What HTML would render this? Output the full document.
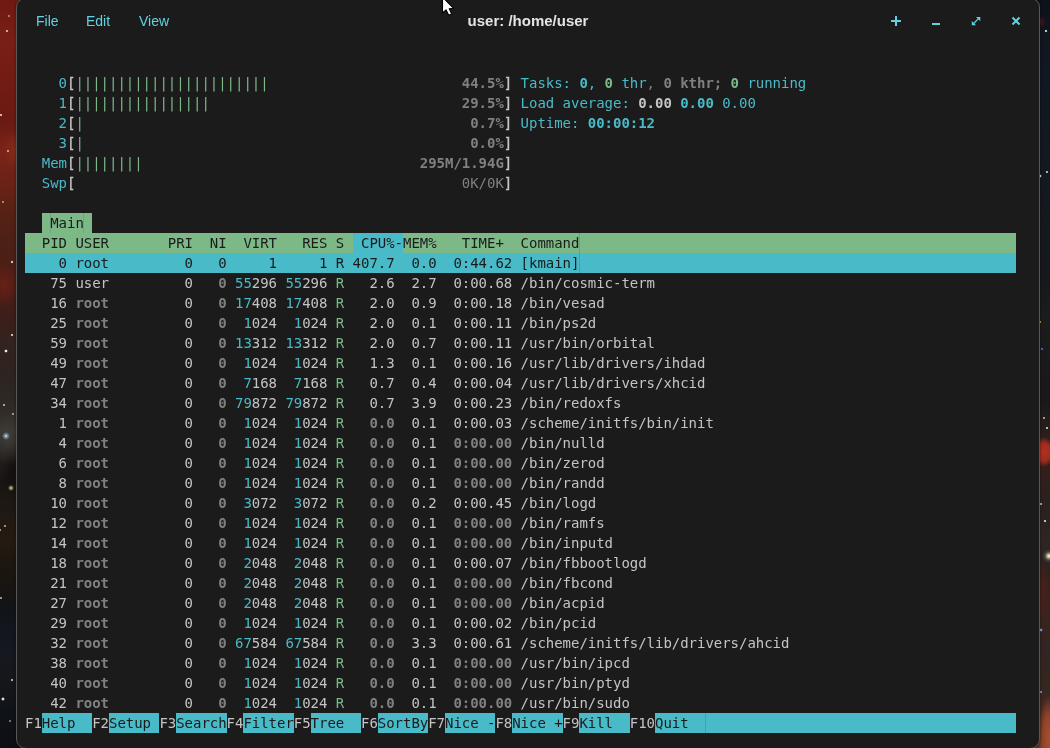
<!DOCTYPE html>
<html lang="en">
<head>
<meta charset="utf-8">
<title>user: /home/user</title>
<style>
html,body{margin:0;padding:0;}
body{width:1050px;height:748px;overflow:hidden;position:relative;background:#0e1016;font-family:"Liberation Sans",sans-serif;}
#wallL{position:absolute;left:0;top:0;width:24px;height:748px;background:
radial-gradient(circle 1.6px at 7px 31px,#c9b9a0 40%,transparent 100%),
radial-gradient(circle 1.4px at 9px 16px,#b98a60 40%,transparent 100%),
radial-gradient(circle 1.6px at 1px 115px,#d8c0a8 40%,transparent 100%),
radial-gradient(circle 1.5px at 8px 151px,#b9a9a0 40%,transparent 100%),
radial-gradient(circle 1.4px at 3px 202px,#a89a80 40%,transparent 100%),
radial-gradient(circle 1.6px at 12px 262px,#c8d0e0 40%,transparent 100%),
radial-gradient(circle 1.6px at 12px 335px,#d8c8b0 40%,transparent 100%),
radial-gradient(circle 1.8px at 6px 351px,#e8f0f8 40%,transparent 100%),
radial-gradient(circle 1.5px at 4px 405px,#c0b0a0 40%,transparent 100%),
radial-gradient(circle 1.5px at 13px 414px,#b0a090 40%,transparent 100%),
radial-gradient(circle 4px at 6px 436px,#f0ffff 0,#7aa0b0 30%,transparent 100%),
radial-gradient(circle 3.2px at 11px 488px,#fff8e0 0,#8a8060 35%,transparent 100%),
radial-gradient(circle 1.5px at 5px 526px,#c09878 40%,transparent 100%),
radial-gradient(circle 1.5px at 0px 530px,#c0a080 40%,transparent 100%),
radial-gradient(circle 1.5px at 1px 598px,#c0a080 40%,transparent 100%),
radial-gradient(circle 1.6px at 12px 680px,#b0b0a8 40%,transparent 100%),
radial-gradient(circle 2px at 3px 699px,#f0e8e0 30%,transparent 100%),
radial-gradient(circle 1.4px at 10px 721px,#8878b0 40%,transparent 100%),
radial-gradient(ellipse 12px 20px at 16px 150px,rgba(150,50,30,.55),transparent 100%),
radial-gradient(ellipse 14px 22px at 4px 285px,rgba(120,35,22,.6),transparent 100%),
radial-gradient(ellipse 16px 26px at 8px 440px,rgba(70,66,62,.6),transparent 100%),
radial-gradient(ellipse 10px 30px at 12px 470px,rgba(12,10,10,.6),transparent 100%),
linear-gradient(to bottom,#6e1912 0px,#7a1f16 40px,#731c14 80px,#6a1a13 120px,#7a2417 150px,#6a2216 185px,#562115 215px,#4a2016 250px,#4f1d15 285px,#3c1e19 315px,#33231f 345px,#2d2420 375px,#2e2723 400px,#38342f 432px,#1f1c1a 462px,#181513 482px,#1f1812 505px,#241a12 540px,#1a150f 575px,#111419 610px,#151820 655px,#15171b 680px,#0e1117 720px,#0d0f14 748px);}
#wallR{position:absolute;left:1030px;top:0;width:20px;height:748px;background:
radial-gradient(circle 1.6px at 16px 31px,#d0d0d0 40%,transparent 100%),
radial-gradient(circle 1.8px at 10px 176px,#d8e4f0 40%,transparent 100%),
radial-gradient(circle 1.6px at 17px 172px,#b0b8c0 40%,transparent 100%),
radial-gradient(circle 1.5px at 10px 322px,#d8a050 40%,transparent 100%),
radial-gradient(circle 1.6px at 12px 349px,#4868d0 40%,transparent 100%),
radial-gradient(circle 1.5px at 14px 418px,#b0a898 40%,transparent 100%),
radial-gradient(circle 1.5px at 17px 428px,#c8c8c0 40%,transparent 100%),
radial-gradient(circle 1.6px at 15px 521px,#c0c8d8 40%,transparent 100%),
radial-gradient(circle 1.6px at 11px 504px,#a8b0c8 40%,transparent 100%),
radial-gradient(circle 7px at 19px 556px,#ffffff 0,#c8b080 25%,rgba(60,90,90,.6) 60%,transparent 100%),
radial-gradient(circle 1.8px at 11px 630px,#88a0e0 40%,transparent 100%),
radial-gradient(circle 1.6px at 11px 692px,#9080d0 40%,transparent 100%),
radial-gradient(ellipse 5px 6px at 11px 22px,rgba(90,26,30,.7),transparent 100%),
radial-gradient(ellipse 11px 15px at 14px 452px,#b03220 0,rgba(165,45,30,.95) 60%,transparent 100%),
radial-gradient(ellipse 9px 30px at 12px 590px,rgba(90,32,24,.6),transparent 100%),
radial-gradient(ellipse 11px 42px at 19px 738px,#a8502f 0,rgba(150,70,42,.9) 55%,transparent 100%),
linear-gradient(to bottom,#0d1119 0px,#111620 40px,#121821 100px,#141920 170px,#15181e 230px,#16181c 270px,#1d1c1d 320px,#1a191b 360px,#1a181a 400px,#2a1f1d 435px,#331f1c 470px,#29211f 500px,#2e2523 540px,#30211d 575px,#3b231d 610px,#302523 650px,#36271f 690px,#4e2c20 720px,#603523 748px);}
#win{position:absolute;left:16px;top:-2px;width:1024px;height:751px;box-sizing:border-box;background:#1b1b1b;border:1px solid #585858;border-radius:9px 9px 10px 10px;box-shadow:0 0 3px rgba(0,0,0,.5);}
.m{will-change:transform;position:absolute;top:11px;height:20px;line-height:20px;font-size:14px;color:#63d0df;white-space:pre;}
#title{position:absolute;left:328px;width:400px;text-align:center;top:11px;height:20px;line-height:20px;font-size:15px;will-change:transform;font-weight:bold;color:#e4e4e4;white-space:pre;}
.ic{position:absolute;top:13px;width:16px;height:16px;}
#term{position:absolute;left:0;top:0;width:1050px;height:748px;will-change:transform;font-family:"DejaVu Sans Mono","Liberation Mono",monospace;font-size:14px;}
.r{position:absolute;height:20px;}
.t{position:absolute;height:20px;line-height:20px;white-space:pre;color:#c4c4c4;letter-spacing:-0.0287px;}
.c{color:#49bac8;}
.g{color:#7cb987;}
.k{color:#808080;}
.d{color:#1b1b1b;}
.bw{color:#c4c4c4;font-weight:bold;}
.br{color:#c4c4c4;-webkit-text-stroke:0.35px #c4c4c4;}
.bk{color:#808080;font-weight:bold;}
.bc{color:#49bac8;font-weight:bold;}
.bg{color:#7cb987;font-weight:bold;}
</style>
</head>
<body>
<div id="wallL"></div>
<div id="wallR"></div>
<div id="win"></div>
<span class="m" style="left:36px">File</span>
<span class="m" style="left:86.4px">Edit</span>
<span class="m" style="left:139.2px">View</span>
<div id="title">user: /home/user</div>
<svg class="ic" style="left:888px" viewBox="0 0 16 16"><path d="M8 3v10M3 8h10" stroke="#63d0df" stroke-width="2" fill="none"/></svg>
<svg class="ic" style="left:928px" viewBox="0 0 16 16"><path d="M4 11h8" stroke="#63d0df" stroke-width="2" fill="none"/></svg>
<svg class="ic" style="left:968px" viewBox="0 0 16 16"><path d="M8 3.9h4.3V8.2zM3.8 7.9v4.3H8.1z" fill="#63d0df"/><path d="M5.6 10.5L10.5 5.6" stroke="#63d0df" stroke-width="1.3" fill="none"/></svg>
<svg class="ic" style="left:1008px" viewBox="0 0 16 16"><path d="M4.5 4.5l7 7M11.5 4.5l-7 7" stroke="#63d0df" stroke-width="2" fill="none"/></svg>
<div id="term">
<div class="r" style="left:41.8px;top:213px;width:50.4px;background:#7cb987"></div>
<div class="r" style="left:25.0px;top:233px;width:991.2px;background:#7cb987"></div>
<div class="r" style="left:352.6px;top:233px;width:50.4px;background:#49bac8"></div>
<div class="r" style="left:25.0px;top:253px;width:991.2px;background:#49bac8"></div>
<div class="r" style="left:41.8px;top:713px;width:50.4px;background:#49bac8"></div>
<div class="r" style="left:109.0px;top:713px;width:50.4px;background:#49bac8"></div>
<div class="r" style="left:176.2px;top:713px;width:50.4px;background:#49bac8"></div>
<div class="r" style="left:243.4px;top:713px;width:50.4px;background:#49bac8"></div>
<div class="r" style="left:310.6px;top:713px;width:50.4px;background:#49bac8"></div>
<div class="r" style="left:377.8px;top:713px;width:50.4px;background:#49bac8"></div>
<div class="r" style="left:445.0px;top:713px;width:50.4px;background:#49bac8"></div>
<div class="r" style="left:512.2px;top:713px;width:50.4px;background:#49bac8"></div>
<div class="r" style="left:579.4px;top:713px;width:50.4px;background:#49bac8"></div>
<div class="r" style="left:655.0px;top:713px;width:50.4px;background:#49bac8"></div>
<div class="r" style="left:705.4px;top:713px;width:310.8px;background:#49bac8"></div>
<div class="r" style="left:578.9px;top:233px;width:1px;background:#6ca077"></div>
<div class="r" style="left:578.9px;top:253px;width:1px;background:#40a2ae"></div>
<div class="r" style="left:704.9px;top:713px;width:1px;background:#40a2ae"></div>
<div class="r" style="left:49.7px;top:213px;width:1px;background:#70a67a"></div>
<div class="r" style="left:83.3px;top:213px;width:1px;background:#70a67a"></div>
<span class="t c" style="left:41.8px;top:73px">  0</span>
<span class="t br" style="left:67.0px;top:73px">[</span>
<span class="t g" style="left:75.4px;top:73px">|||||||||||||||||||||||</span>
<span class="t bk" style="left:461.8px;top:73px">44.5%</span>
<span class="t br" style="left:503.8px;top:73px">]</span>
<span class="t c" style="left:41.8px;top:93px">  1</span>
<span class="t br" style="left:67.0px;top:93px">[</span>
<span class="t g" style="left:75.4px;top:93px">||||||||||||||||</span>
<span class="t bk" style="left:461.8px;top:93px">29.5%</span>
<span class="t br" style="left:503.8px;top:93px">]</span>
<span class="t c" style="left:41.8px;top:113px">  2</span>
<span class="t br" style="left:67.0px;top:113px">[</span>
<span class="t g" style="left:75.4px;top:113px">|</span>
<span class="t bk" style="left:470.2px;top:113px">0.7%</span>
<span class="t br" style="left:503.8px;top:113px">]</span>
<span class="t c" style="left:41.8px;top:133px">  3</span>
<span class="t br" style="left:67.0px;top:133px">[</span>
<span class="t g" style="left:75.4px;top:133px">|</span>
<span class="t bk" style="left:470.2px;top:133px">0.0%</span>
<span class="t br" style="left:503.8px;top:133px">]</span>
<span class="t c" style="left:41.8px;top:153px">Mem</span>
<span class="t br" style="left:67.0px;top:153px">[</span>
<span class="t g" style="left:75.4px;top:153px">||||||||</span>
<span class="t bk" style="left:419.8px;top:153px">295M/1.94G</span>
<span class="t br" style="left:503.8px;top:153px">]</span>
<span class="t c" style="left:41.8px;top:173px">Swp</span>
<span class="t br" style="left:67.0px;top:173px">[</span>
<span class="t k" style="left:461.8px;top:173px">0K/0K</span>
<span class="t br" style="left:503.8px;top:173px">]</span>
<span class="t c" style="left:520.6px;top:73px">Tasks: </span>
<span class="t bc" style="left:579.4px;top:73px">0</span>
<span class="t c" style="left:587.8px;top:73px">,</span>
<span class="t bg" style="left:604.6px;top:73px">0</span>
<span class="t c" style="left:613.0px;top:73px"> thr</span>
<span class="t k" style="left:646.6px;top:73px">,</span>
<span class="t bk" style="left:663.4px;top:73px">0</span>
<span class="t bk" style="left:680.2px;top:73px">kthr;</span>
<span class="t bg" style="left:730.6px;top:73px">0</span>
<span class="t c" style="left:739.0px;top:73px"> running</span>
<span class="t c" style="left:520.6px;top:93px">Load average: </span>
<span class="t bw" style="left:638.2px;top:93px">0.00</span>
<span class="t bc" style="left:680.2px;top:93px">0.00</span>
<span class="t c" style="left:722.2px;top:93px">0.00</span>
<span class="t c" style="left:520.6px;top:113px">Uptime: </span>
<span class="t bc" style="left:587.8px;top:113px">00:00:12</span>
<span class="t d" style="left:25.0px;top:253px">    0</span>
<span class="t d" style="left:75.4px;top:253px">root</span>
<span class="t d" style="left:167.8px;top:253px">  0</span>
<span class="t d" style="left:201.4px;top:253px">  0</span>
<span class="t d" style="left:268.6px;top:253px">1</span>
<span class="t d" style="left:319.0px;top:253px">1</span>
<span class="t d" style="left:335.8px;top:253px">R</span>
<span class="t d" style="left:352.6px;top:253px">407.7</span>
<span class="t d" style="left:403.0px;top:253px"> 0.0</span>
<span class="t d" style="left:445.0px;top:253px"> 0:44.62</span>
<span class="t d" style="left:520.6px;top:253px">[kmain]</span>
<span class="t " style="left:25.0px;top:273px">   75</span>
<span class="t " style="left:75.4px;top:273px">user</span>
<span class="t " style="left:167.8px;top:273px">  0</span>
<span class="t bk" style="left:201.4px;top:273px">  0</span>
<span class="t c" style="left:235.0px;top:273px">55</span>
<span class="t " style="left:251.8px;top:273px">296</span>
<span class="t c" style="left:285.4px;top:273px">55</span>
<span class="t " style="left:302.2px;top:273px">296</span>
<span class="t g" style="left:335.8px;top:273px">R</span>
<span class="t " style="left:352.6px;top:273px">  2.6</span>
<span class="t " style="left:403.0px;top:273px"> 2.7</span>
<span class="t " style="left:445.0px;top:273px"> 0:00.68</span>
<span class="t " style="left:520.6px;top:273px">/bin/cosmic-term</span>
<span class="t " style="left:25.0px;top:293px">   16</span>
<span class="t bk" style="left:75.4px;top:293px">root</span>
<span class="t " style="left:167.8px;top:293px">  0</span>
<span class="t bk" style="left:201.4px;top:293px">  0</span>
<span class="t c" style="left:235.0px;top:293px">17</span>
<span class="t " style="left:251.8px;top:293px">408</span>
<span class="t c" style="left:285.4px;top:293px">17</span>
<span class="t " style="left:302.2px;top:293px">408</span>
<span class="t g" style="left:335.8px;top:293px">R</span>
<span class="t " style="left:352.6px;top:293px">  2.0</span>
<span class="t " style="left:403.0px;top:293px"> 0.9</span>
<span class="t " style="left:445.0px;top:293px"> 0:00.18</span>
<span class="t " style="left:520.6px;top:293px">/bin/vesad</span>
<span class="t " style="left:25.0px;top:313px">   25</span>
<span class="t bk" style="left:75.4px;top:313px">root</span>
<span class="t " style="left:167.8px;top:313px">  0</span>
<span class="t bk" style="left:201.4px;top:313px">  0</span>
<span class="t c" style="left:243.4px;top:313px">1</span>
<span class="t " style="left:251.8px;top:313px">024</span>
<span class="t c" style="left:293.8px;top:313px">1</span>
<span class="t " style="left:302.2px;top:313px">024</span>
<span class="t g" style="left:335.8px;top:313px">R</span>
<span class="t " style="left:352.6px;top:313px">  2.0</span>
<span class="t " style="left:403.0px;top:313px"> 0.1</span>
<span class="t " style="left:445.0px;top:313px"> 0:00.11</span>
<span class="t " style="left:520.6px;top:313px">/bin/ps2d</span>
<span class="t " style="left:25.0px;top:333px">   59</span>
<span class="t bk" style="left:75.4px;top:333px">root</span>
<span class="t " style="left:167.8px;top:333px">  0</span>
<span class="t bk" style="left:201.4px;top:333px">  0</span>
<span class="t c" style="left:235.0px;top:333px">13</span>
<span class="t " style="left:251.8px;top:333px">312</span>
<span class="t c" style="left:285.4px;top:333px">13</span>
<span class="t " style="left:302.2px;top:333px">312</span>
<span class="t g" style="left:335.8px;top:333px">R</span>
<span class="t " style="left:352.6px;top:333px">  2.0</span>
<span class="t " style="left:403.0px;top:333px"> 0.7</span>
<span class="t " style="left:445.0px;top:333px"> 0:00.11</span>
<span class="t " style="left:520.6px;top:333px">/usr/bin/orbital</span>
<span class="t " style="left:25.0px;top:353px">   49</span>
<span class="t bk" style="left:75.4px;top:353px">root</span>
<span class="t " style="left:167.8px;top:353px">  0</span>
<span class="t bk" style="left:201.4px;top:353px">  0</span>
<span class="t c" style="left:243.4px;top:353px">1</span>
<span class="t " style="left:251.8px;top:353px">024</span>
<span class="t c" style="left:293.8px;top:353px">1</span>
<span class="t " style="left:302.2px;top:353px">024</span>
<span class="t g" style="left:335.8px;top:353px">R</span>
<span class="t " style="left:352.6px;top:353px">  1.3</span>
<span class="t " style="left:403.0px;top:353px"> 0.1</span>
<span class="t " style="left:445.0px;top:353px"> 0:00.16</span>
<span class="t " style="left:520.6px;top:353px">/usr/lib/drivers/ihdad</span>
<span class="t " style="left:25.0px;top:373px">   47</span>
<span class="t bk" style="left:75.4px;top:373px">root</span>
<span class="t " style="left:167.8px;top:373px">  0</span>
<span class="t bk" style="left:201.4px;top:373px">  0</span>
<span class="t c" style="left:243.4px;top:373px">7</span>
<span class="t " style="left:251.8px;top:373px">168</span>
<span class="t c" style="left:293.8px;top:373px">7</span>
<span class="t " style="left:302.2px;top:373px">168</span>
<span class="t g" style="left:335.8px;top:373px">R</span>
<span class="t " style="left:352.6px;top:373px">  0.7</span>
<span class="t " style="left:403.0px;top:373px"> 0.4</span>
<span class="t " style="left:445.0px;top:373px"> 0:00.04</span>
<span class="t " style="left:520.6px;top:373px">/usr/lib/drivers/xhcid</span>
<span class="t " style="left:25.0px;top:393px">   34</span>
<span class="t bk" style="left:75.4px;top:393px">root</span>
<span class="t " style="left:167.8px;top:393px">  0</span>
<span class="t bk" style="left:201.4px;top:393px">  0</span>
<span class="t c" style="left:235.0px;top:393px">79</span>
<span class="t " style="left:251.8px;top:393px">872</span>
<span class="t c" style="left:285.4px;top:393px">79</span>
<span class="t " style="left:302.2px;top:393px">872</span>
<span class="t g" style="left:335.8px;top:393px">R</span>
<span class="t " style="left:352.6px;top:393px">  0.7</span>
<span class="t " style="left:403.0px;top:393px"> 3.9</span>
<span class="t " style="left:445.0px;top:393px"> 0:00.23</span>
<span class="t " style="left:520.6px;top:393px">/bin/redoxfs</span>
<span class="t " style="left:25.0px;top:413px">    1</span>
<span class="t bk" style="left:75.4px;top:413px">root</span>
<span class="t " style="left:167.8px;top:413px">  0</span>
<span class="t bk" style="left:201.4px;top:413px">  0</span>
<span class="t c" style="left:243.4px;top:413px">1</span>
<span class="t " style="left:251.8px;top:413px">024</span>
<span class="t c" style="left:293.8px;top:413px">1</span>
<span class="t " style="left:302.2px;top:413px">024</span>
<span class="t g" style="left:335.8px;top:413px">R</span>
<span class="t bk" style="left:352.6px;top:413px">  0.0</span>
<span class="t " style="left:403.0px;top:413px"> 0.1</span>
<span class="t " style="left:445.0px;top:413px"> 0:00.03</span>
<span class="t " style="left:520.6px;top:413px">/scheme/initfs/bin/init</span>
<span class="t " style="left:25.0px;top:433px">    4</span>
<span class="t bk" style="left:75.4px;top:433px">root</span>
<span class="t " style="left:167.8px;top:433px">  0</span>
<span class="t bk" style="left:201.4px;top:433px">  0</span>
<span class="t c" style="left:243.4px;top:433px">1</span>
<span class="t " style="left:251.8px;top:433px">024</span>
<span class="t c" style="left:293.8px;top:433px">1</span>
<span class="t " style="left:302.2px;top:433px">024</span>
<span class="t g" style="left:335.8px;top:433px">R</span>
<span class="t bk" style="left:352.6px;top:433px">  0.0</span>
<span class="t " style="left:403.0px;top:433px"> 0.1</span>
<span class="t bk" style="left:445.0px;top:433px"> 0:00.00</span>
<span class="t " style="left:520.6px;top:433px">/bin/nulld</span>
<span class="t " style="left:25.0px;top:453px">    6</span>
<span class="t bk" style="left:75.4px;top:453px">root</span>
<span class="t " style="left:167.8px;top:453px">  0</span>
<span class="t bk" style="left:201.4px;top:453px">  0</span>
<span class="t c" style="left:243.4px;top:453px">1</span>
<span class="t " style="left:251.8px;top:453px">024</span>
<span class="t c" style="left:293.8px;top:453px">1</span>
<span class="t " style="left:302.2px;top:453px">024</span>
<span class="t g" style="left:335.8px;top:453px">R</span>
<span class="t bk" style="left:352.6px;top:453px">  0.0</span>
<span class="t " style="left:403.0px;top:453px"> 0.1</span>
<span class="t bk" style="left:445.0px;top:453px"> 0:00.00</span>
<span class="t " style="left:520.6px;top:453px">/bin/zerod</span>
<span class="t " style="left:25.0px;top:473px">    8</span>
<span class="t bk" style="left:75.4px;top:473px">root</span>
<span class="t " style="left:167.8px;top:473px">  0</span>
<span class="t bk" style="left:201.4px;top:473px">  0</span>
<span class="t c" style="left:243.4px;top:473px">1</span>
<span class="t " style="left:251.8px;top:473px">024</span>
<span class="t c" style="left:293.8px;top:473px">1</span>
<span class="t " style="left:302.2px;top:473px">024</span>
<span class="t g" style="left:335.8px;top:473px">R</span>
<span class="t bk" style="left:352.6px;top:473px">  0.0</span>
<span class="t " style="left:403.0px;top:473px"> 0.1</span>
<span class="t bk" style="left:445.0px;top:473px"> 0:00.00</span>
<span class="t " style="left:520.6px;top:473px">/bin/randd</span>
<span class="t " style="left:25.0px;top:493px">   10</span>
<span class="t bk" style="left:75.4px;top:493px">root</span>
<span class="t " style="left:167.8px;top:493px">  0</span>
<span class="t bk" style="left:201.4px;top:493px">  0</span>
<span class="t c" style="left:243.4px;top:493px">3</span>
<span class="t " style="left:251.8px;top:493px">072</span>
<span class="t c" style="left:293.8px;top:493px">3</span>
<span class="t " style="left:302.2px;top:493px">072</span>
<span class="t g" style="left:335.8px;top:493px">R</span>
<span class="t bk" style="left:352.6px;top:493px">  0.0</span>
<span class="t " style="left:403.0px;top:493px"> 0.2</span>
<span class="t " style="left:445.0px;top:493px"> 0:00.45</span>
<span class="t " style="left:520.6px;top:493px">/bin/logd</span>
<span class="t " style="left:25.0px;top:513px">   12</span>
<span class="t bk" style="left:75.4px;top:513px">root</span>
<span class="t " style="left:167.8px;top:513px">  0</span>
<span class="t bk" style="left:201.4px;top:513px">  0</span>
<span class="t c" style="left:243.4px;top:513px">1</span>
<span class="t " style="left:251.8px;top:513px">024</span>
<span class="t c" style="left:293.8px;top:513px">1</span>
<span class="t " style="left:302.2px;top:513px">024</span>
<span class="t g" style="left:335.8px;top:513px">R</span>
<span class="t bk" style="left:352.6px;top:513px">  0.0</span>
<span class="t " style="left:403.0px;top:513px"> 0.1</span>
<span class="t bk" style="left:445.0px;top:513px"> 0:00.00</span>
<span class="t " style="left:520.6px;top:513px">/bin/ramfs</span>
<span class="t " style="left:25.0px;top:533px">   14</span>
<span class="t bk" style="left:75.4px;top:533px">root</span>
<span class="t " style="left:167.8px;top:533px">  0</span>
<span class="t bk" style="left:201.4px;top:533px">  0</span>
<span class="t c" style="left:243.4px;top:533px">1</span>
<span class="t " style="left:251.8px;top:533px">024</span>
<span class="t c" style="left:293.8px;top:533px">1</span>
<span class="t " style="left:302.2px;top:533px">024</span>
<span class="t g" style="left:335.8px;top:533px">R</span>
<span class="t bk" style="left:352.6px;top:533px">  0.0</span>
<span class="t " style="left:403.0px;top:533px"> 0.1</span>
<span class="t bk" style="left:445.0px;top:533px"> 0:00.00</span>
<span class="t " style="left:520.6px;top:533px">/bin/inputd</span>
<span class="t " style="left:25.0px;top:553px">   18</span>
<span class="t bk" style="left:75.4px;top:553px">root</span>
<span class="t " style="left:167.8px;top:553px">  0</span>
<span class="t bk" style="left:201.4px;top:553px">  0</span>
<span class="t c" style="left:243.4px;top:553px">2</span>
<span class="t " style="left:251.8px;top:553px">048</span>
<span class="t c" style="left:293.8px;top:553px">2</span>
<span class="t " style="left:302.2px;top:553px">048</span>
<span class="t g" style="left:335.8px;top:553px">R</span>
<span class="t bk" style="left:352.6px;top:553px">  0.0</span>
<span class="t " style="left:403.0px;top:553px"> 0.1</span>
<span class="t " style="left:445.0px;top:553px"> 0:00.07</span>
<span class="t " style="left:520.6px;top:553px">/bin/fbbootlogd</span>
<span class="t " style="left:25.0px;top:573px">   21</span>
<span class="t bk" style="left:75.4px;top:573px">root</span>
<span class="t " style="left:167.8px;top:573px">  0</span>
<span class="t bk" style="left:201.4px;top:573px">  0</span>
<span class="t c" style="left:243.4px;top:573px">2</span>
<span class="t " style="left:251.8px;top:573px">048</span>
<span class="t c" style="left:293.8px;top:573px">2</span>
<span class="t " style="left:302.2px;top:573px">048</span>
<span class="t g" style="left:335.8px;top:573px">R</span>
<span class="t bk" style="left:352.6px;top:573px">  0.0</span>
<span class="t " style="left:403.0px;top:573px"> 0.1</span>
<span class="t bk" style="left:445.0px;top:573px"> 0:00.00</span>
<span class="t " style="left:520.6px;top:573px">/bin/fbcond</span>
<span class="t " style="left:25.0px;top:593px">   27</span>
<span class="t bk" style="left:75.4px;top:593px">root</span>
<span class="t " style="left:167.8px;top:593px">  0</span>
<span class="t bk" style="left:201.4px;top:593px">  0</span>
<span class="t c" style="left:243.4px;top:593px">2</span>
<span class="t " style="left:251.8px;top:593px">048</span>
<span class="t c" style="left:293.8px;top:593px">2</span>
<span class="t " style="left:302.2px;top:593px">048</span>
<span class="t g" style="left:335.8px;top:593px">R</span>
<span class="t bk" style="left:352.6px;top:593px">  0.0</span>
<span class="t " style="left:403.0px;top:593px"> 0.1</span>
<span class="t bk" style="left:445.0px;top:593px"> 0:00.00</span>
<span class="t " style="left:520.6px;top:593px">/bin/acpid</span>
<span class="t " style="left:25.0px;top:613px">   29</span>
<span class="t bk" style="left:75.4px;top:613px">root</span>
<span class="t " style="left:167.8px;top:613px">  0</span>
<span class="t bk" style="left:201.4px;top:613px">  0</span>
<span class="t c" style="left:243.4px;top:613px">1</span>
<span class="t " style="left:251.8px;top:613px">024</span>
<span class="t c" style="left:293.8px;top:613px">1</span>
<span class="t " style="left:302.2px;top:613px">024</span>
<span class="t g" style="left:335.8px;top:613px">R</span>
<span class="t bk" style="left:352.6px;top:613px">  0.0</span>
<span class="t " style="left:403.0px;top:613px"> 0.1</span>
<span class="t " style="left:445.0px;top:613px"> 0:00.02</span>
<span class="t " style="left:520.6px;top:613px">/bin/pcid</span>
<span class="t " style="left:25.0px;top:633px">   32</span>
<span class="t bk" style="left:75.4px;top:633px">root</span>
<span class="t " style="left:167.8px;top:633px">  0</span>
<span class="t bk" style="left:201.4px;top:633px">  0</span>
<span class="t c" style="left:235.0px;top:633px">67</span>
<span class="t " style="left:251.8px;top:633px">584</span>
<span class="t c" style="left:285.4px;top:633px">67</span>
<span class="t " style="left:302.2px;top:633px">584</span>
<span class="t g" style="left:335.8px;top:633px">R</span>
<span class="t bk" style="left:352.6px;top:633px">  0.0</span>
<span class="t " style="left:403.0px;top:633px"> 3.3</span>
<span class="t " style="left:445.0px;top:633px"> 0:00.61</span>
<span class="t " style="left:520.6px;top:633px">/scheme/initfs/lib/drivers/ahcid</span>
<span class="t " style="left:25.0px;top:653px">   38</span>
<span class="t bk" style="left:75.4px;top:653px">root</span>
<span class="t " style="left:167.8px;top:653px">  0</span>
<span class="t bk" style="left:201.4px;top:653px">  0</span>
<span class="t c" style="left:243.4px;top:653px">1</span>
<span class="t " style="left:251.8px;top:653px">024</span>
<span class="t c" style="left:293.8px;top:653px">1</span>
<span class="t " style="left:302.2px;top:653px">024</span>
<span class="t g" style="left:335.8px;top:653px">R</span>
<span class="t bk" style="left:352.6px;top:653px">  0.0</span>
<span class="t " style="left:403.0px;top:653px"> 0.1</span>
<span class="t bk" style="left:445.0px;top:653px"> 0:00.00</span>
<span class="t " style="left:520.6px;top:653px">/usr/bin/ipcd</span>
<span class="t " style="left:25.0px;top:673px">   40</span>
<span class="t bk" style="left:75.4px;top:673px">root</span>
<span class="t " style="left:167.8px;top:673px">  0</span>
<span class="t bk" style="left:201.4px;top:673px">  0</span>
<span class="t c" style="left:243.4px;top:673px">1</span>
<span class="t " style="left:251.8px;top:673px">024</span>
<span class="t c" style="left:293.8px;top:673px">1</span>
<span class="t " style="left:302.2px;top:673px">024</span>
<span class="t g" style="left:335.8px;top:673px">R</span>
<span class="t bk" style="left:352.6px;top:673px">  0.0</span>
<span class="t " style="left:403.0px;top:673px"> 0.1</span>
<span class="t bk" style="left:445.0px;top:673px"> 0:00.00</span>
<span class="t " style="left:520.6px;top:673px">/usr/bin/ptyd</span>
<span class="t " style="left:25.0px;top:693px">   42</span>
<span class="t bk" style="left:75.4px;top:693px">root</span>
<span class="t " style="left:167.8px;top:693px">  0</span>
<span class="t bk" style="left:201.4px;top:693px">  0</span>
<span class="t c" style="left:243.4px;top:693px">1</span>
<span class="t " style="left:251.8px;top:693px">024</span>
<span class="t c" style="left:293.8px;top:693px">1</span>
<span class="t " style="left:302.2px;top:693px">024</span>
<span class="t g" style="left:335.8px;top:693px">R</span>
<span class="t bk" style="left:352.6px;top:693px">  0.0</span>
<span class="t " style="left:403.0px;top:693px"> 0.1</span>
<span class="t bk" style="left:445.0px;top:693px"> 0:00.00</span>
<span class="t " style="left:520.6px;top:693px">/usr/bin/sudo</span>
<span class="t d" style="left:25.0px;top:233px">  PID USER       PRI  NI  VIRT   RES S  CPU%-MEM%   TIME+  Command</span>
<span class="t d" style="left:50.2px;top:213px">Main</span>
<span class="t " style="left:25.0px;top:713px">F1</span>
<span class="t d" style="left:41.8px;top:713px">Help  </span>
<span class="t " style="left:92.2px;top:713px">F2</span>
<span class="t d" style="left:109.0px;top:713px">Setup </span>
<span class="t " style="left:159.4px;top:713px">F3</span>
<span class="t d" style="left:176.2px;top:713px">Search</span>
<span class="t " style="left:226.6px;top:713px">F4</span>
<span class="t d" style="left:243.4px;top:713px">Filter</span>
<span class="t " style="left:293.8px;top:713px">F5</span>
<span class="t d" style="left:310.6px;top:713px">Tree  </span>
<span class="t " style="left:361.0px;top:713px">F6</span>
<span class="t d" style="left:377.8px;top:713px">SortBy</span>
<span class="t " style="left:428.2px;top:713px">F7</span>
<span class="t d" style="left:445.0px;top:713px">Nice -</span>
<span class="t " style="left:495.4px;top:713px">F8</span>
<span class="t d" style="left:512.2px;top:713px">Nice +</span>
<span class="t " style="left:562.6px;top:713px">F9</span>
<span class="t d" style="left:579.4px;top:713px">Kill  </span>
<span class="t " style="left:629.8px;top:713px">F10</span>
<span class="t d" style="left:655.0px;top:713px">Quit  </span>
</div>
<svg style="position:absolute;left:438px;top:0;width:20px;height:18px" viewBox="438 0 20 18"><path d="M442.5 -3V13L446.1 9.9L448.7 15.3L451.7 13.9L449.2 8.7L453.6 8.3Z" fill="#fff" stroke="#000" stroke-width="1.1" stroke-linejoin="round"/></svg>
</body>
</html>
